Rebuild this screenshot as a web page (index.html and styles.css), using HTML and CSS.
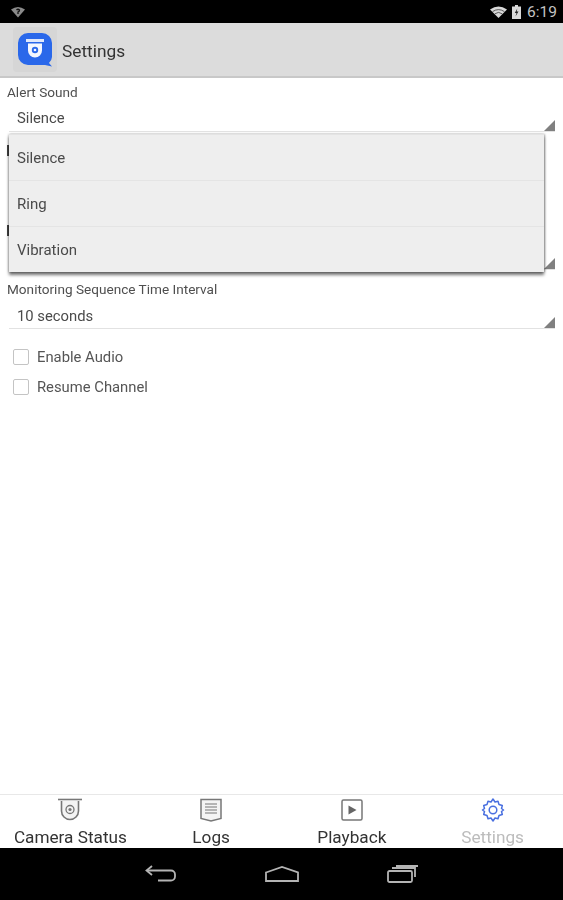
FILE: index.html
```html
<!DOCTYPE html>
<html lang="en">
<head>
  <meta charset="UTF-8">
  <meta name="viewport" content="width=device-width, initial-scale=1.0">
  <title>Settings</title>
  <link rel="stylesheet" href="styles.css">
</head>
<body>
  <div class="status-bar">
    <svg class="status-left" width="14" height="12" viewBox="0 0 14 12"><path d="M0 3.500 Q7 -1.500 14 3.500 L7 11.500 Z" fill="#8a8a8a"/><path d="M5.500 4 Q7 2.500 8.500 4 Q8.500 5.500 7 6 L7 8" stroke="#111" stroke-width="1.300" fill="none"/></svg>
    <div class="status-right">
      <svg width="17" height="12" viewBox="0 0 17 12"><path d="M0 3.500 Q8.500 -2.500 17 3.500 L8.500 12 Z" fill="#d8d8d8"/><path d="M2.600 5.600 Q8.500 1.600 14.400 5.600 M4.800 7.800 Q8.500 5 12.200 7.800" stroke="#222" stroke-width=".7" fill="none"/></svg>
      <svg width="9" height="14" viewBox="0 0 9 14"><path d="M3 0h3v1.500h3V14H0V1.500h3z" fill="#d8d8d8"/><path d="M5.300 3.500 2.800 8h1.700l-1 3.400L6.500 6.600H4.700z" fill="#222"/></svg>
      <span class="clock">6:19</span>
    </div>
  </div>

  <header class="action-bar">
    <div class="app-icon">
      <svg width="36" height="36" viewBox="0 0 36 36">
        <path d="M11 1h14a10 10 0 0 1 10 10v14a9 9 0 0 1-3 6l3 3.500-7-1.500H11a10 10 0 0 1-10-10V11a10 10 0 0 1 10-10z" fill="#2a68ea"/>
        <rect x="9" y="7" width="18" height="3" fill="#dfe8fb"/>
        <path d="M11 11.500h14v7a7 7 0 0 1-14 0z" fill="#f4f7fe"/>
        <circle cx="18" cy="18" r="3.200" fill="#2a68ea"/>
        <circle cx="18" cy="18" r="1.300" fill="#f4f7fe"/>
      </svg>
    </div>
    <h1 class="page-title">Settings</h1>
  </header>

  <main class="settings">
    <div class="field">
      <div class="field-label">Alert Sound</div>
      <div class="spinner">Silence</div>
    </div>
    <div class="field field-second">
      <div class="label-sliver"></div>
    </div>
    <div class="field field-third">
      <div class="label-sliver"></div>
      <div class="spinner"></div>
    </div>
    <div class="field field-fourth">
      <div class="field-label">Monitoring Sequence Time Interval</div>
      <div class="spinner spinner-low">10 seconds</div>
    </div>
    <label class="check-row check-row-first"><span class="check-box"></span>Enable Audio</label>
    <label class="check-row"><span class="check-box"></span>Resume Channel</label>

    <ul class="dropdown">
      <li>Silence</li>
      <li>Ring</li>
      <li>Vibration</li>
    </ul>
  </main>

  <nav class="tabs">
    <div class="tab">
      <svg width="26" height="24" viewBox="0 0 26 24" fill="none" stroke="#777"><path d="M1 1.500h24" stroke-width="1.600"/><path d="M4.500 3v10a8.500 8.500 0 0 0 17 0V3" stroke-width="1.600" fill="#f4f4f4"/><circle cx="13" cy="11.500" r="4" stroke-width="1.300"/><circle cx="13" cy="11.500" r="1.600" fill="#777" stroke="none"/></svg>
      <span>Camera Status</span>
    </div>
    <div class="tab">
      <svg width="24" height="24" viewBox="0 0 24 24" fill="#f4f4f4" stroke="#777"><path d="M2 1.500h20v19l-10 2.500-10-2.500z" stroke-width="1.500"/><path d="M6 6h12M6 9h12M6 12h12M6 15h12" stroke-width="1"/></svg>
      <span>Logs</span>
    </div>
    <div class="tab">
      <svg width="24" height="24" viewBox="0 0 24 24" fill="none"><rect x="2" y="2" width="20" height="20" rx="1.500" stroke="#777" stroke-width="1.500"/><path d="M8.500 7.500v9l8-4.500z" fill="#666"/></svg>
      <span>Playback</span>
    </div>
    <div class="tab tab-active">
      <svg width="24" height="24" viewBox="0 0 24 24" fill="none" stroke="#4a70e0" stroke-width="1.500" stroke-linejoin="round"><path d="M12 1l2 3 3-.8 1 3.300 3.300 1-.8 3 2 1.500-2 1.500.8 3-3.300 1-1 3.300-3-.8-2 3-2-3-3 .8-1-3.300-3.300-1 .8-3-2-1.500 2-1.500-.8-3 3.300-1 1-3.300 3 .8z"/><circle cx="12" cy="12" r="3.800"/></svg>
      <span>Settings</span>
    </div>
  </nav>

  <div class="nav-bar">
    <svg width="32" height="18" viewBox="0 0 32 18" fill="none" stroke="#b4b4b4" stroke-width="1.800"><path d="M7 1 1.500 5.500 7 10"/><path d="M2 5.500h24a4 4 0 0 1 4 4v2a4 4 0 0 1-4 4H13"/></svg>
    <svg width="34" height="16" viewBox="0 0 34 16" fill="none" stroke="#b4b4b4" stroke-width="1.800"><path d="M1 6.500 17 1l16 5.500V15H1z"/></svg>
    <svg width="32" height="18" viewBox="0 0 32 18" fill="none" stroke="#b4b4b4" stroke-width="1.800"><rect x="1" y="6" width="24" height="11" rx="1.500"/><path d="M5 3h23v9M9 1h22"/></svg>
  </div>
</body>
</html>
```

FILE: styles.css
```css
body {
  margin: 0;
  height: 900px;
  display: flex;
  flex-direction: column;
  background-color: #ffffff;
  font-family: Roboto, "Liberation Sans", sans-serif;
  color: #4a4a4a;
  overflow: hidden;
  filter: blur(0.4px);
}
.status-bar {
  height: 23px;
  background-color: #000000;
  display: flex;
  align-items: center;
  justify-content: space-between;
  padding: 0 6px 0 11px;
}
.status-right {
  display: flex;
  align-items: center;
  gap: 5px;
}
.clock {
  color: #c4c4c4;
  font-size: 15.500px;
  margin-left: 1px;
}
.action-bar {
  height: 55px;
  background-color: #dcdcdc;
  border-bottom: 2px solid #c8c8c8;
  box-sizing: border-box;
  display: flex;
  align-items: center;
  padding-left: 13px;
}
.app-icon {
  width: 44px;
  height: 45px;
  background-color: #d6d6d6;
  border-radius: 4px;
  display: flex;
  align-items: center;
  justify-content: center;
}
.page-title {
  margin: 2px 0 0 5px;
  font-size: 17.300px;
  font-weight: 400;
  color: #333333;
}
.settings {
  flex: 1;
  position: relative;
  padding-top: 6px;
}
.field {
  display: flex;
  flex-direction: column;
}
.field-label {
  font-size: 13.600px;
  line-height: 16px;
  margin-left: 7px;
  color: #4f4f4f;
}
/* only the left edge of these labels shows beside the open list */
.label-sliver {
  width: 2px;
  height: 11px;
  margin: 3px 0 2px 7px;
  background-color: #444444;
}
.spinner {
  margin: 0 8px 0 9px;
  padding: 8px 8px 0;
  height: 32px;
  box-sizing: border-box;
  font-size: 14.800px;
  line-height: 20px;
  border-bottom: 1px solid #e2e2e2;
  position: relative;
}
.spinner-low {
  padding-top: 9px;
}
.spinner::after {
  content: "";
  position: absolute;
  right: 0;
  bottom: 0;
  border-style: solid;
  border-width: 0 0 11px 11px;
  border-color: transparent transparent #808080 transparent;
}
.field-second {
  margin-top: 10px;
}
.field-third {
  margin-top: 64px;
}
.field-fourth {
  margin-top: 11px;
}
.check-row {
  display: flex;
  align-items: center;
  height: 30px;
  padding-left: 13px;
  font-size: 14.800px;
  color: #555555;
}
.check-row-first {
  margin-top: 13px;
}
.check-box {
  width: 14px;
  height: 14px;
  border: 1px solid #c4c4c4;
  border-radius: 2px;
  margin-right: 8px;
}
.dropdown {
  position: absolute;
  left: 9px;
  top: 56px;
  width: 535px;
  margin: 0;
  padding: 0;
  list-style: none;
  background-color: #eeeeee;
  box-shadow: 0 3px 3px rgba(0, 0, 0, 0.55), 1px 0 2px rgba(0, 0, 0, 0.3), -1px 0 2px rgba(0, 0, 0, 0.15);
  border-top: 1px solid #e4e4e4;
  font-size: 15px;
}
.dropdown li {
  height: 46px;
  box-sizing: border-box;
  padding: 13px 8px 0;
  line-height: 20px;
  border-bottom: 1px solid #e4e4e4;
}
.dropdown li:last-child {
  height: 45px;
  border-bottom: none;
}
.tabs {
  height: 54px;
  display: flex;
  box-sizing: border-box;
  border-top: 1px solid #e8e8e8;
  padding-top: 3px;
  background-color: #ffffff;
}
.tab {
  flex: 1;
  display: flex;
  flex-direction: column;
  align-items: center;
  font-size: 17.200px;
  color: #333333;
  line-height: 18px;
  gap: 6px;
}
.tab-active span {
  color: #bcbcbc;
}
.nav-bar {
  height: 52px;
  background-color: #000000;
  display: flex;
  align-items: center;
  justify-content: center;
  gap: 88px;
}
```
